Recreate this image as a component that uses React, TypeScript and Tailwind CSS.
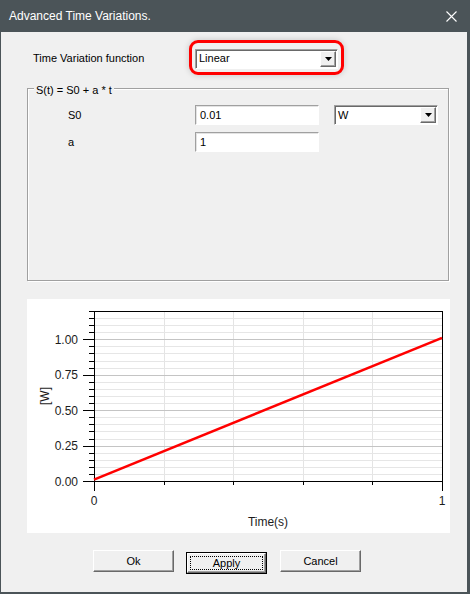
import React from 'react';

const font = { fontFamily: '"Liberation Sans", Arial, sans-serif' };

// plot geometry, relative to the white chart panel
const X0 = 67;
const X1 = 415;
const YB = 182;
const YT = 12;
const PER_UNIT = (YB - YT) / 1.2;
const yOf = (v: number) => YB - v * PER_UNIT;

const yLabels = ['0.00', '0.25', '0.50', '0.75', '1.00'];

const Chart = () => {
  const steps = Array.from({ length: 25 }, (_, i) => i);
  const vLines = [1, 2, 3, 4].map(k => X0 + (k * (X1 - X0)) / 5);

  return (
    <svg width="423" height="234" viewBox="0 0 423 234" className="block">
      {/* grid */}
      {vLines.map(x => (
        <line key={'v' + x} x1={Math.round(x) + 0.5} x2={Math.round(x) + 0.5} y1={YT} y2={YB} stroke="#e4e4e4" strokeWidth="1" shapeRendering="crispEdges" />
      ))}
      {steps.slice(1, 24).map(i => (
        <line
          key={'h' + i}
          x1={X0}
          x2={X1}
          y1={Math.round(yOf(i * 0.05)) + 0.5}
          y2={Math.round(yOf(i * 0.05)) + 0.5}
          stroke={i % 5 === 0 ? '#c4c4c4' : '#e6e6e6'}
          strokeWidth="1"
          shapeRendering="crispEdges"
        />
      ))}

      {/* y ticks */}
      {steps.map(i => (
        <line
          key={'t' + i}
          x1={i % 5 === 0 ? 56 : 62}
          x2={X0}
          y1={Math.round(yOf(i * 0.05)) + 0.5}
          y2={Math.round(yOf(i * 0.05)) + 0.5}
          stroke="#000"
          strokeWidth="1"
          shapeRendering="crispEdges"
        />
      ))}

      {/* x ticks */}
      {[X0, ...vLines, X1].map((x, i) => (
        <line
          key={'x' + i}
          x1={Math.round(x) + 0.5}
          x2={Math.round(x) + 0.5}
          y1={YB}
          y2={i === 0 || i === 5 ? YB + 10 : YB + 4}
          stroke="#000"
          strokeWidth="1"
          shapeRendering="crispEdges"
        />
      ))}

      {/* frame */}
      <rect x={X0 + 0.5} y={YT + 0.5} width={X1 - X0} height={YB - YT} fill="none" stroke="#000" strokeWidth="1" shapeRendering="crispEdges" />

      {/* series */}
      <line x1={X0} y1={yOf(0.01)} x2={X1} y2={yOf(1.01)} stroke="#ff0000" strokeWidth="2.6" />

      <g style={font} fontSize="12" fill="#1c1c1c">
        {yLabels.map((l, i) => (
          <text key={l} x="51" y={yOf(i * 0.25) + 4.5} textAnchor="end">
            {l}
          </text>
        ))}
        <text x={X0} y="206" textAnchor="middle">0</text>
        <text x={X1} y="206" textAnchor="middle">1</text>
        <text x={(X0 + X1) / 2} y="227" textAnchor="middle">Time(s)</text>
        <text x="22" y="97" textAnchor="middle" transform="rotate(-90 22 97)">[W]</text>
      </g>
    </svg>
  );
};

const Arrow = () => (
  <div className="flex w-[16px] items-center justify-center self-stretch border border-t-white border-l-white border-r-[#696969] border-b-[#696969] bg-[#f0f0f0] shadow-[inset_-1px_-1px_0_#a0a0a0]">
    <svg width="7" height="4" viewBox="0 0 7 4">
      <path d="M0 0 H7 L3.5 4 Z" fill="#000" />
    </svg>
  </div>
);

const Combo = ({ value, width }: { value: string; width: string }) => (
  <div className={`flex h-[20px] ${width} items-stretch border border-t-[#a0a0a0] border-l-[#a0a0a0] border-r-white border-b-white bg-white p-[1px] shadow-[inset_1px_1px_0_#696969]`}>
    <span className="flex flex-1 items-center pl-[2px] text-[11px] text-black">{value}</span>
    <Arrow />
  </div>
);

const TextBox = ({ value }: { value: string }) => (
  <div className="flex h-[20px] w-[124px] items-center border border-t-[#a0a0a0] border-l-[#a0a0a0] border-r-white border-b-white bg-white pl-[4px] text-[11px] text-black shadow-[inset_1px_1px_0_#e3e3e3]">
    {value}
  </div>
);

const Btn = ({ label, isDefault }: { label: string; isDefault?: boolean }) =>
  isDefault ? (
    <button className="h-[22px] w-[81px] border border-[#000] bg-[#f0f0f0] p-0 text-[11px] text-black">
      <div className="flex h-full w-full items-center justify-center border border-t-white border-l-white border-r-[#696969] border-b-[#696969] p-[2px] shadow-[inset_-1px_-1px_0_#a0a0a0]">
        <div className="flex h-full w-full items-center justify-center border border-dotted border-black">{label}</div>
      </div>
    </button>
  ) : (
    <button className="flex h-[22px] w-[81px] items-center justify-center border border-t-white border-l-white border-r-[#696969] border-b-[#696969] bg-[#f0f0f0] text-[11px] text-black shadow-[inset_-1px_-1px_0_#a0a0a0]">
      {label}
    </button>
  );

const App = () => {
  return (
    <div style={font} className="flex h-[594px] w-[470px] flex-col overflow-hidden border-l border-r-[3px] border-b-2 border-[#4b5458] bg-[#f0f0f0]">
      {/* title bar */}
      <div className="flex h-[32px] shrink-0 items-center justify-between bg-[#4b5458] pl-[8px] pr-[10px]">
        <span className="text-[12px] text-white">Advanced Time Variations.</span>
        <svg width="11" height="11" viewBox="0 0 11 11">
          <path d="M0.5 0.5 L10.5 10.5 M10.5 0.5 L0.5 10.5" stroke="#fff" strokeWidth="1.1" />
        </svg>
      </div>

      <div className="flex flex-col pl-[26px]">
        {/* function selector */}
        <div className="mt-[8px] flex h-[34px] items-center">
          <span className="ml-[6px] mt-[2px] w-[156px] text-[11px] text-black">Time Variation function</span>
          <div className="rounded-[9px] border-[3px] border-[#ff0000] px-[3px] pt-[6px] pb-[3px] shadow-[0_0_6px_rgba(0,0,0,0.18)]">
            <Combo value="Linear" width="w-[143px]" />
          </div>
        </div>

        {/* parameters group */}
        <div className="relative mt-[14px] h-[193px] w-[422px] border border-[#a0a0a0] shadow-[inset_1px_1px_0_#fff,1px_1px_0_#fff]">
          <span className="absolute -top-[7px] left-[6px] bg-[#f0f0f0] px-[2px] text-[11px] text-black">S(t) = S0 + a * t</span>
          <div className="flex flex-col pt-[16px] pl-[40px]">
            <div className="flex items-center">
              <span className="mt-[1px] w-[127px] text-[11px] text-black">S0</span>
              <TextBox value="0.01" />
              <div className="ml-[15px]">
                <Combo value="W" width="w-[104px]" />
              </div>
            </div>
            <div className="mt-[7px] flex items-center">
              <span className="mt-[1px] w-[127px] text-[11px] text-black">a</span>
              <TextBox value="1" />
            </div>
          </div>
        </div>

        {/* chart */}
        <div className="mt-[18px] h-[234px] w-[423px] bg-white">
          <Chart />
        </div>

        {/* buttons */}
        <div className="mt-[17px] ml-[66px] flex">
          <Btn label="Ok" />
          <div className="ml-[12px]">
            <Btn label="Apply" isDefault />
          </div>
          <div className="ml-[13px]">
            <Btn label="Cancel" />
          </div>
        </div>
      </div>
    </div>
  );
};

export default App;
